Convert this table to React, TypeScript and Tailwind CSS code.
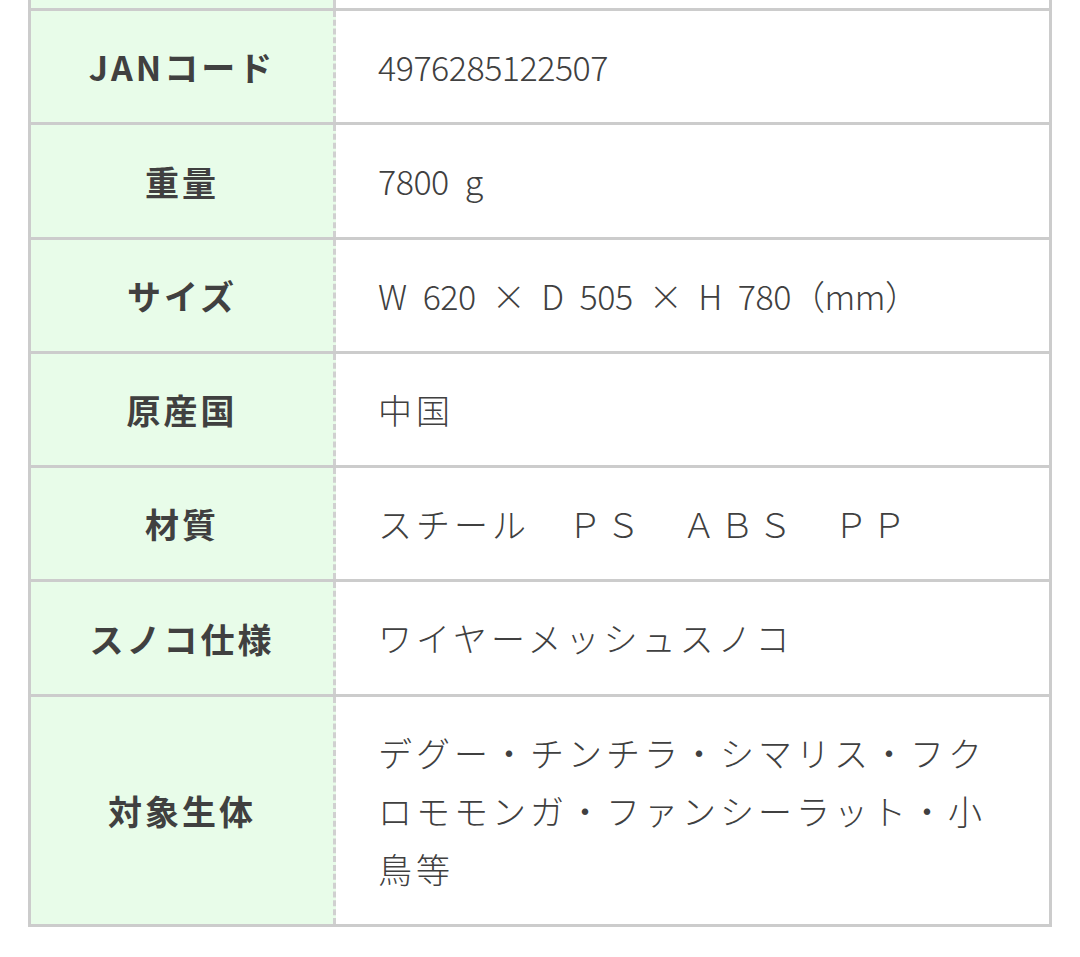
import React from "react";

const rows: { label: string; value: string; latin?: boolean; h: string }[] = [
  { label: "JANコード", value: "4976285122507", latin: true, h: "min-h-[111px]" },
  { label: "重量", value: "7800 g", latin: true, h: "min-h-[112px]" },
  { label: "サイズ", value: "W 620 × D 505 × H 780（mm）", latin: true, h: "min-h-[111px]" },
  { label: "原産国", value: "中国", h: "min-h-[111px]" },
  { label: "材質", value: "スチール　ＰＳ　ＡＢＳ　ＰＰ", h: "min-h-[111px]" },
  { label: "スノコ仕様", value: "ワイヤーメッシュスノコ", h: "min-h-[112px]" },
  {
    label: "対象生体",
    value: "デグー・チンチラ・シマリス・フクロモモンガ・ファンシーラット・小鳥等",
    h: "min-h-[227px]",
  },
];

const font = {
  fontFamily: '"Noto Sans CJK JP", "Noto Sans", Roboto, sans-serif',
};

export default function App() {
  return (
    <div className="w-[1080px] h-[957px] bg-white" style={font}>
      <div className="ml-[28px] w-[1024px] border-x-[3px] border-b-[3px] border-[#cccccc]">
        <div className="flex h-[11px] border-b-[3px] border-[#cccccc]">
          <div className="w-[305px] bg-[#e8fce9] border-r-[3px] border-dashed border-r-[#d0d0d0]" />
          <div className="flex-1 bg-white" />
        </div>
        {rows.map((r, i) => (
          <div
            key={i}
            className={`flex ${i < rows.length - 1 ? "border-b-[3px] border-[#cccccc]" : ""}`}
          >
            <div className="w-[305px] shrink-0 bg-[#e8fce9] border-r-[3px] border-dashed border-r-[#d0d0d0] flex items-center justify-center">
              <span className="text-[34px] font-bold text-[#404040] tracking-[3px]">
                {r.label}
              </span>
            </div>
            <div className={`flex-1 flex items-center pl-[42px] pr-[42px] ${r.h}`}>
              {r.latin ? (
                <span className="text-[34px] font-light text-[#404040] leading-[58px] tracking-[-0.5px] [word-spacing:9px]">
                  {r.value}
                </span>
              ) : (
                <span className="text-[34px] font-light text-[#404040] leading-[58px] tracking-[4px]">
                  {r.value}
                </span>
              )}
            </div>
          </div>
        ))}
      </div>
    </div>
  );
}
